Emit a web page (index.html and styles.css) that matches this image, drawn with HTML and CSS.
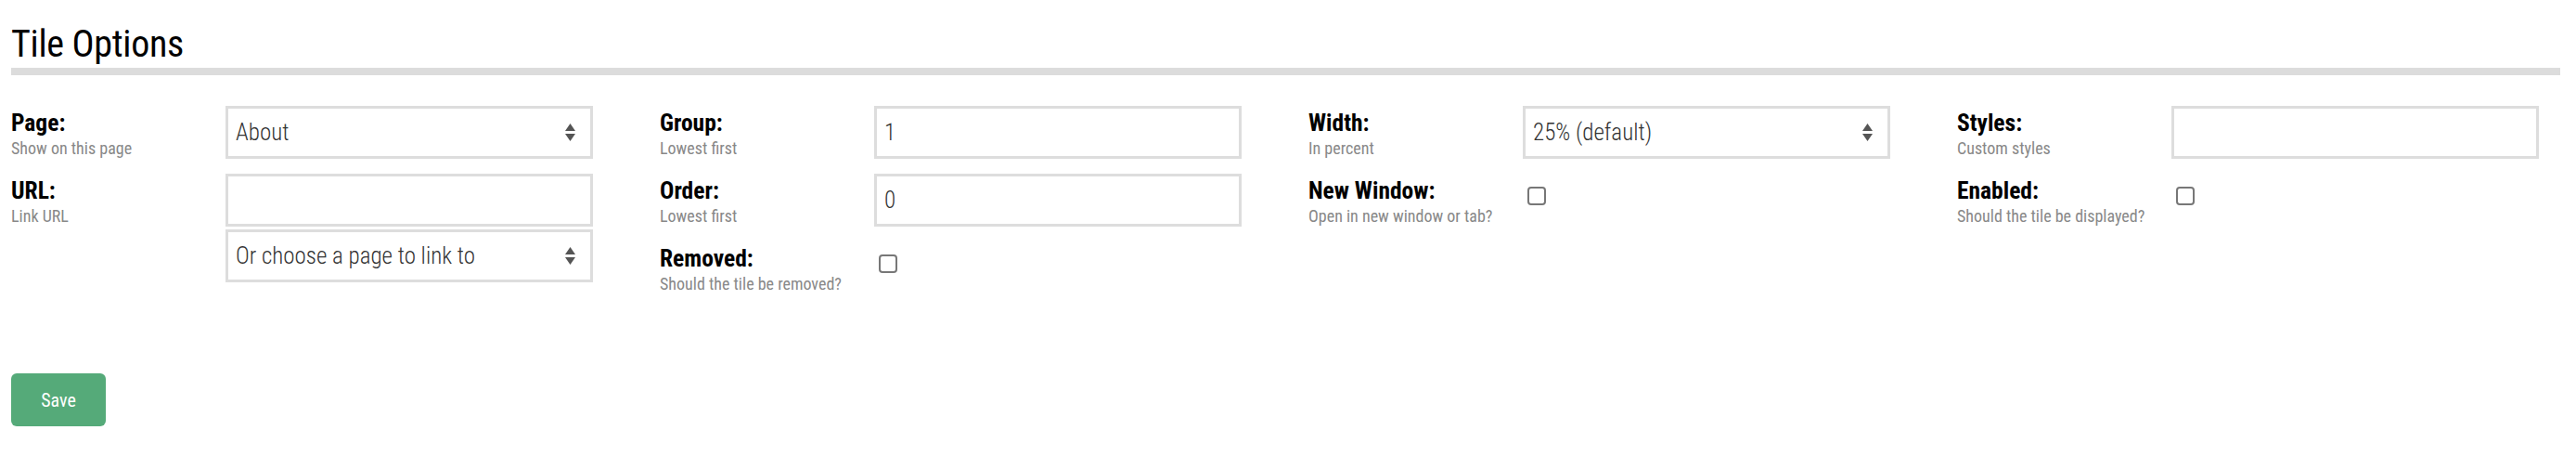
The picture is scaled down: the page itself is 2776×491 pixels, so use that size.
FILE: index.html
```html
<!DOCTYPE html>
<html lang="en">
<head>
<meta charset="utf-8">
<title>Tile Options</title>
<link rel="stylesheet" href="styles.css">
</head>
<body>
<main class="page">
  <h1 class="title">Tile Options</h1>
  <form class="tile-form">
    <div class="grid">
      <div class="col">
        <div class="field">
          <div class="label"><label class="label-name">Page:</label><span class="hint">Show on this page</span></div>
          <div class="control">
            <div class="select-wrap">
              <select class="select"><option>About</option></select>
              <svg class="arrows" viewBox="0 0 11 19"><path d="M5.5 0 L11 8 H0 Z M0 11 H11 L5.5 19 Z"/></svg>
            </div>
          </div>
        </div>
        <div class="field">
          <div class="label"><label class="label-name">URL:</label><span class="hint">Link URL</span></div>
          <div class="control">
            <input class="input" type="text" value="">
            <div class="select-wrap">
              <select class="select"><option>Or choose a page to link to</option></select>
              <svg class="arrows" viewBox="0 0 11 19"><path d="M5.5 0 L11 8 H0 Z M0 11 H11 L5.5 19 Z"/></svg>
            </div>
          </div>
        </div>
      </div>
      <div class="col">
        <div class="field">
          <div class="label"><label class="label-name">Group:</label><span class="hint">Lowest first</span></div>
          <div class="control"><input class="input" type="text" value="1"></div>
        </div>
        <div class="field">
          <div class="label"><label class="label-name">Order:</label><span class="hint">Lowest first</span></div>
          <div class="control"><input class="input" type="text" value="0"></div>
        </div>
        <div class="field">
          <div class="label"><label class="label-name">Removed:</label><span class="hint">Should the tile be removed?</span></div>
          <div class="control"><input class="check" type="checkbox"></div>
        </div>
      </div>
      <div class="col">
        <div class="field">
          <div class="label"><label class="label-name">Width:</label><span class="hint">In percent</span></div>
          <div class="control">
            <div class="select-wrap">
              <select class="select"><option>25% (default)</option></select>
              <svg class="arrows" viewBox="0 0 11 19"><path d="M5.5 0 L11 8 H0 Z M0 11 H11 L5.5 19 Z"/></svg>
            </div>
          </div>
        </div>
        <div class="field">
          <div class="label"><label class="label-name">New Window:</label><span class="hint">Open in new window or tab?</span></div>
          <div class="control"><input class="check" type="checkbox"></div>
        </div>
      </div>
      <div class="col">
        <div class="field">
          <div class="label"><label class="label-name">Styles:</label><span class="hint">Custom styles</span></div>
          <div class="control"><input class="input" type="text" value=""></div>
        </div>
        <div class="field">
          <div class="label"><label class="label-name">Enabled:</label><span class="hint">Should the tile be displayed?</span></div>
          <div class="control"><input class="check" type="checkbox"></div>
        </div>
      </div>
    </div>
    <div class="actions"><button class="btn" type="button">Save</button></div>
  </form>
</main>
</body>
</html>
```

FILE: styles.css
```css
* { box-sizing: border-box; }

body {
  margin: 0;
  background: #fff;
  color: #000;
  font-family: "Roboto Condensed", Roboto, "Liberation Sans", sans-serif;
}

.page {
  padding: 24px 17px 0 12px;
}

.title {
  margin: 0;
  font-size: 40px;
  line-height: 48px;
  font-weight: normal;
  letter-spacing: -0.3px;
  padding-bottom: 1px;
  border-bottom: 8px solid #dcdcdc;
}

.tile-form {
  margin-top: 33px;
}

.grid {
  display: grid;
  grid-template-columns: repeat(4, 627px);
  column-gap: 72px;
  align-items: start;
}

.col {
  display: flex;
  flex-direction: column;
  gap: 16px;
}

.field {
  display: flex;
  align-items: flex-start;
}

.label {
  width: 231px;
  flex: none;
  display: flex;
  flex-direction: column;
  padding-top: 3px;
}

.label-name {
  font-size: 25.5px;
  line-height: 30px;
  font-weight: bold;
}

.hint {
  margin-top: 3px;
  font-size: 18px;
  line-height: 20px;
  color: #888;
}

.control {
  width: 396px;
  display: flex;
  flex-direction: column;
  gap: 3px;
}

.input,
.select {
  display: block;
  width: 396px;
  height: 57px;
  margin: 0;
  padding: 0 8px;
  border: 3px solid #dddddd;
  border-radius: 0;
  background: #fff;
  font-family: inherit;
  font-size: 25px;
  font-weight: 300;
  color: #333;
  outline: none;
  appearance: none;
  -webkit-appearance: none;
}

.select-wrap {
  position: relative;
}

.arrows {
  position: absolute;
  right: 19px;
  top: 19px;
  width: 11px;
  height: 19px;
  fill: #555;
  pointer-events: none;
}

.check {
  appearance: none;
  -webkit-appearance: none;
  width: 20px;
  height: 20px;
  margin: 14px 0 0 5px;
  border: 2px solid #777;
  border-radius: 4px;
  background: #fff;
}

.actions {
  margin-top: 86px;
}

.btn {
  width: 102px;
  height: 57px;
  border: none;
  border-radius: 6px;
  background: #55aa79;
  color: #fff;
  font-family: inherit;
  font-size: 20px;
}
```
